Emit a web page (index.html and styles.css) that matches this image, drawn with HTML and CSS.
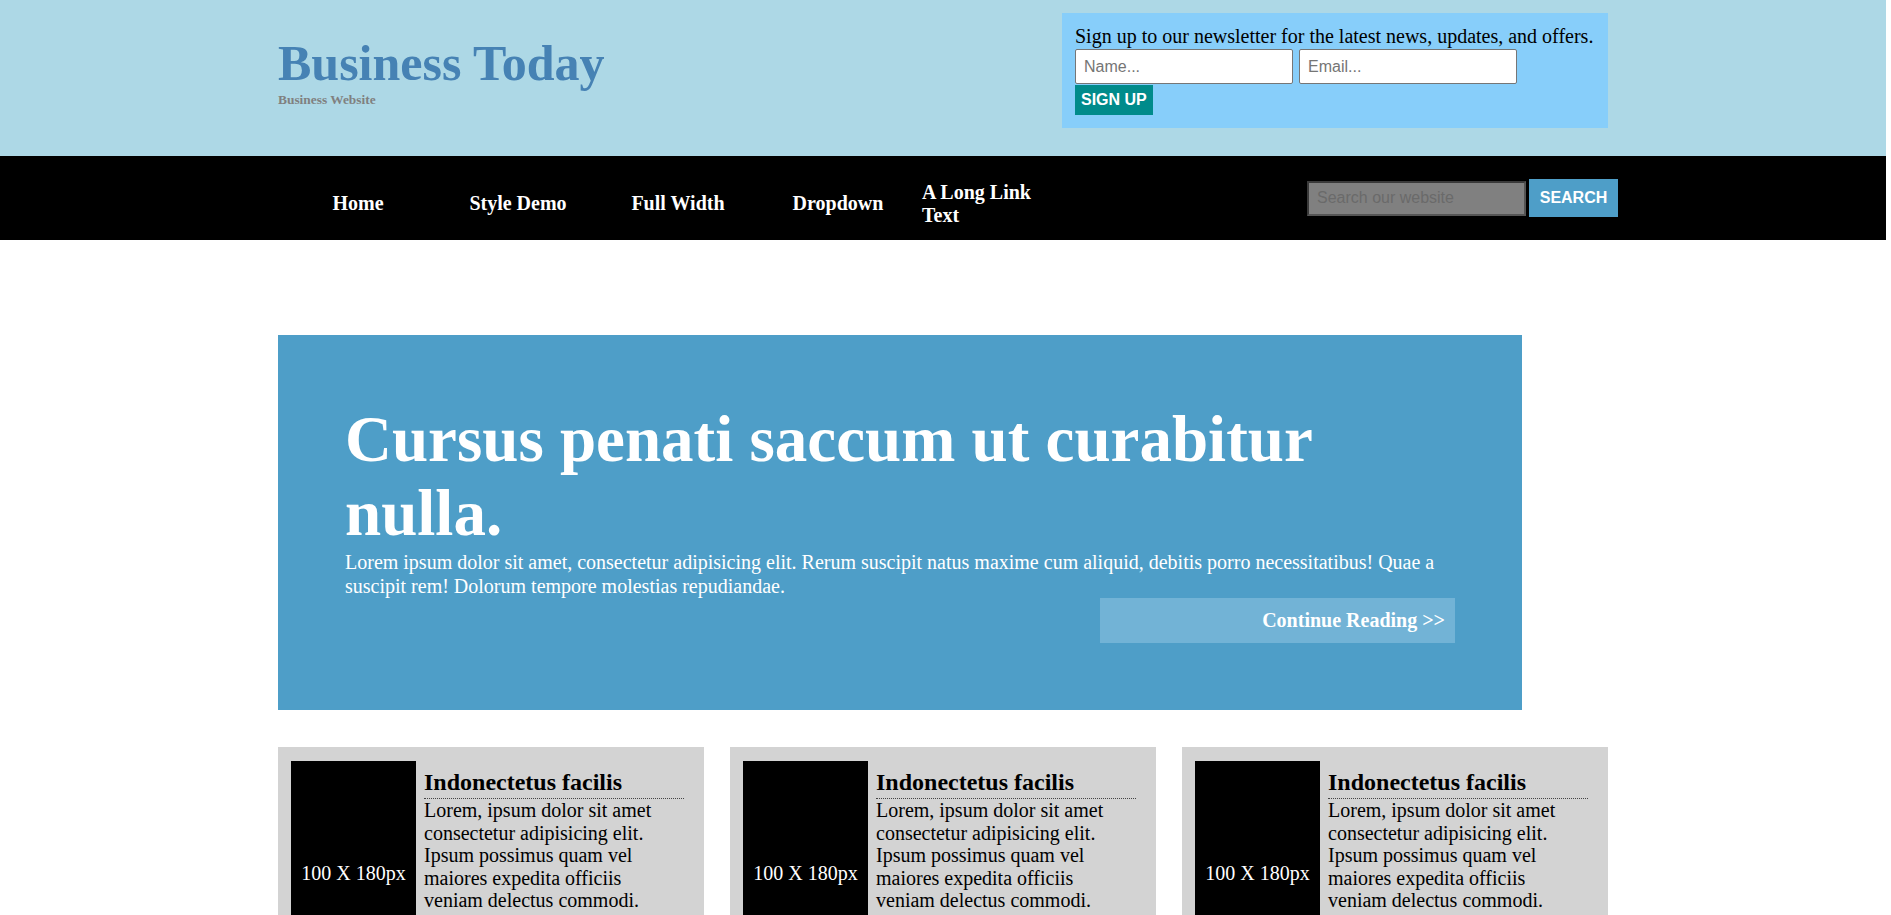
FILE: index.html
```html
<!DOCTYPE html>
<html lang="en">
<head>
<meta charset="utf-8">
<title>Business Today</title>
<link rel="stylesheet" href="styles.css">
</head>
<body>
<header class="topbar">
  <div class="wrap topbar-inner">
    <div class="brand">
      <h1 class="brand-title">Business Today</h1>
      <p class="brand-tag">Business Website</p>
    </div>
    <form class="newsletter">
      <p class="newsletter-text">Sign up to our newsletter for the latest news, updates, and offers.</p>
      <div class="newsletter-fields">
        <input class="field" type="text" placeholder="Name...">
        <input class="field" type="email" placeholder="Email...">
      </div>
      <button class="btn-signup" type="button">SIGN UP</button>
    </form>
  </div>
</header>
<nav class="mainnav">
  <div class="wrap mainnav-inner">
    <ul class="navlinks">
      <li class="navitem"><a href="#">Home</a></li>
      <li class="navitem"><a href="#">Style Demo</a></li>
      <li class="navitem"><a href="#">Full Width</a></li>
      <li class="navitem"><a href="#">Dropdown</a></li>
      <li class="navitem navitem-long"><a href="#">A Long Link Text</a></li>
    </ul>
    <form class="search">
      <input class="search-field" type="text" placeholder="Search our website">
      <button class="search-btn" type="button">SEARCH</button>
    </form>
  </div>
</nav>
<main class="wrap content">
  <section class="hero">
    <h2 class="hero-title">Cursus penati saccum ut curabitur nulla.</h2>
    <p class="hero-text">Lorem ipsum dolor sit amet, consectetur adipisicing elit. Rerum suscipit natus maxime cum aliquid, debitis porro necessitatibus! Quae a suscipit rem! Dolorum tempore molestias repudiandae.</p>
    <a class="hero-more" href="#">Continue Reading &gt;&gt;</a>
  </section>
  <section class="cards">
    <article class="card">
      <div class="card-img">100 X 180px</div>
      <div class="card-body">
        <h3 class="card-title">Indonectetus facilis</h3>
        <p class="card-text">Lorem, ipsum dolor sit amet consectetur adipisicing elit. Ipsum possimus quam vel maiores expedita officiis veniam delectus commodi.</p>
      </div>
    </article>
    <article class="card">
      <div class="card-img">100 X 180px</div>
      <div class="card-body">
        <h3 class="card-title">Indonectetus facilis</h3>
        <p class="card-text">Lorem, ipsum dolor sit amet consectetur adipisicing elit. Ipsum possimus quam vel maiores expedita officiis veniam delectus commodi.</p>
      </div>
    </article>
    <article class="card">
      <div class="card-img">100 X 180px</div>
      <div class="card-body">
        <h3 class="card-title">Indonectetus facilis</h3>
        <p class="card-text">Lorem, ipsum dolor sit amet consectetur adipisicing elit. Ipsum possimus quam vel maiores expedita officiis veniam delectus commodi.</p>
      </div>
    </article>
  </section>
</main>
</body>
</html>
```
FILE: styles.css
```css
* { box-sizing: border-box; }

html, body { margin: 0; }

body {
  padding-right: 5px;
  font-family: "Liberation Serif", "Times New Roman", serif;
  color: #000;
  background: #fff;
}

.wrap {
  width: 1330px;
  margin-left: auto;
  margin-right: auto;
}

/* header */
.topbar {
  background: #add8e6;
  height: 156px;
}

.topbar-inner {
  display: flex;
  justify-content: space-between;
  align-items: flex-start;
}

.brand {
  padding-top: 35px;
}

.brand-title {
  margin: 0;
  font-size: 50px;
  font-weight: bold;
  color: #4682b4;
  line-height: 1.15;
}

.brand-tag {
  margin: -1px 0 0;
  font-size: 13.4px;
  font-weight: bold;
  color: #808080;
}

.newsletter {
  margin-top: 13px;
  width: 546px;
  padding: 12px 13px 13px;
  background: #87cefa;
}

.newsletter-text {
  margin: 0 0 1px;
  font-size: 20px;
  line-height: 23px;
  white-space: nowrap;
}

.newsletter-fields {
  display: flex;
  gap: 6px;
}

.field {
  width: 218px;
  height: 35px;
  padding: 6px 8px;
  border: 1px solid #767676;
  border-radius: 2px;
  background: #fff;
  font-family: "Liberation Sans", Arial, sans-serif;
  font-size: 16px;
}

.field::placeholder { color: #757575; }

.btn-signup {
  display: block;
  margin-top: 1px;
  height: 30px;
  padding: 0 6px;
  border: 0;
  background: #008b8b;
  color: #fff;
  font-family: "Liberation Sans", Arial, sans-serif;
  font-size: 16px;
  font-weight: bold;
}

/* nav */
.mainnav {
  background: #000;
  height: 84px;
}

.mainnav-inner {
  height: 100%;
  display: flex;
  align-items: center;
  justify-content: space-between;
}

.navlinks {
  list-style: none;
  margin: 0;
  padding: 11px 0 0;
  display: flex;
  align-items: center;
}

.navitem {
  width: 160px;
  text-align: center;
}

.navitem a {
  color: #fff;
  text-decoration: none;
  font-size: 20px;
  font-weight: bold;
}

.navitem-long {
  width: 118px;
  padding-left: 4px;
  text-align: left;
}

.search {
  display: flex;
  align-items: center;
  gap: 3px;
  margin-right: -10px;
}

.search-field {
  width: 219px;
  height: 35px;
  padding: 0 8px;
  border: 2px solid #3a3a3a;
  border-right-color: #555;
  border-bottom-color: #555;
  background: #808080;
  font-family: "Liberation Sans", Arial, sans-serif;
  font-size: 16px;
}

.search-field::placeholder { color: #6a6a6a; }

.search-btn {
  width: 89px;
  height: 38px;
  border: 0;
  background: #4e9ec8;
  color: #fff;
  font-family: "Liberation Sans", Arial, sans-serif;
  font-size: 16px;
  font-weight: bold;
}

/* hero */
.content {
  padding-top: 95px;
}

.hero {
  width: 1244px;
  padding: 67px;
  background: #4e9ec8;
  color: #fff;
  display: flex;
  flex-direction: column;
}

.hero-title {
  margin: 0;
  font-size: 65px;
  font-weight: bold;
  line-height: 74px;
}

.hero-text {
  margin: 0;
  font-size: 20px;
  line-height: 24px;
}

.hero-more {
  align-self: flex-end;
  width: 355px;
  padding: 11px 10px;
  background: #72b3d6;
  color: #fff;
  text-align: right;
  text-decoration: none;
  font-size: 20px;
  font-weight: bold;
  line-height: 23px;
}

/* cards */
.cards {
  margin-top: 37px;
  display: grid;
  grid-template-columns: repeat(3, 1fr);
  gap: 26px;
}

.card {
  background: #d3d3d3;
  padding: 14px 20px 14px 13px;
  display: flex;
  align-items: flex-start;
  gap: 8px;
}

.card-img {
  flex: none;
  width: 125px;
  height: 224px;
  background: #000;
  color: #fff;
  font-size: 20px;
  display: flex;
  align-items: center;
  justify-content: center;
}

.card-body {
  flex: 1;
}

.card-title {
  margin: 8px 0 0;
  padding-bottom: 2px;
  border-bottom: 1px dotted #444;
  font-size: 24px;
  font-weight: bold;
  line-height: 27px;
}

.card-text {
  margin: 0;
  font-size: 20px;
  line-height: 22.5px;
}
```
